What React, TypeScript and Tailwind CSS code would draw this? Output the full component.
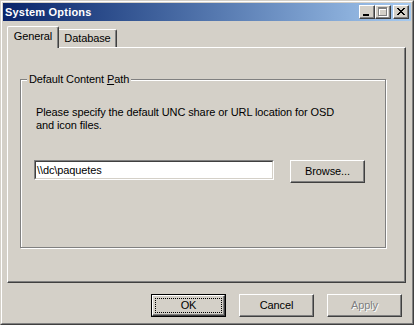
import React from 'react'

function CaptionButton({ kind, gap }: { kind: 'min' | 'max' | 'close'; gap?: boolean }) {
  return (
    <div
      className={`relative w-[16px] h-[14px] bg-[#d4d0c8] border border-t-white border-l-white border-r-[#404040] border-b-[#404040] shadow-[inset_-1px_-1px_0_#808080] ${gap ? 'ml-[2px]' : ''}`}
    >
      <svg className="absolute -left-px -top-px" width="16" height="14" viewBox="0 0 16 14" shapeRendering="crispEdges">
        {kind === 'min' && <rect x="4" y="9" width="6" height="2" fill="#000" />}
        {kind === 'max' && (
          <>
            <g fill="#fff" transform="translate(1 1)">
              <rect x="3" y="2" width="9" height="2" />
              <rect x="3" y="4" width="1" height="7" />
              <rect x="11" y="4" width="1" height="7" />
              <rect x="3" y="10" width="9" height="1" />
            </g>
            <g fill="#808080">
              <rect x="3" y="2" width="9" height="2" />
              <rect x="3" y="4" width="1" height="7" />
              <rect x="11" y="4" width="1" height="7" />
              <rect x="3" y="10" width="9" height="1" />
            </g>
          </>
        )}
        {kind === 'close' && (
          <g fill="#000">
            {[0, 1, 2, 3, 4, 5, 6].map((i) => (
              <React.Fragment key={i}>
                <rect x={4 + i} y={3 + i} width="2" height="1" />
                <rect x={10 - i} y={3 + i} width="2" height="1" />
              </React.Fragment>
            ))}
          </g>
        )}
      </svg>
    </div>
  )
}

function PushButton({ label, isDefault, disabled, className = '' }: { label: string; isDefault?: boolean; disabled?: boolean; className?: string }) {
  if (isDefault) {
    return (
      <div className={`w-[75px] h-[23px] border border-black ${className}`}>
        <div className="h-full border border-t-white border-l-white border-r-[#404040] border-b-[#404040] shadow-[inset_-1px_-1px_0_#808080] p-[2px]">
          <div className="h-full border border-dotted border-black flex items-center justify-center leading-[13px]">
            {label}
          </div>
        </div>
      </div>
    )
  }
  return (
    <div
      className={`w-[75px] h-[23px] border border-t-white border-l-white border-r-[#404040] border-b-[#404040] shadow-[inset_-1px_-1px_0_#808080] flex items-center justify-center leading-[13px] ${
        disabled ? 'text-[#808080] [text-shadow:1px_1px_0_#fff]' : ''
      } ${className}`}
    >
      {label}
    </div>
  )
}

export default function App() {
  return (
    <div className="w-[414px] h-[325px] bg-[#d4d0c8] overflow-hidden font-['Liberation_Sans',Arial,sans-serif] text-[11px] text-black tracking-[-0.1px] select-none">
      <div className="h-full border border-t-[#d4d0c8] border-l-[#d4d0c8] border-r-[#404040] border-b-[#404040]">
        <div className="h-full border border-t-white border-l-white border-r-[#808080] border-b-[#808080] p-px flex flex-col">
          {/* Title bar */}
          <div className="h-[18px] flex items-center bg-gradient-to-r from-[#0a246a] to-[#a6caf0] pl-[2px] pr-[2px]">
            <span className="text-white font-bold tracking-[0.2px] leading-[13px]">System Options</span>
            <div className="ml-auto flex items-center">
              <CaptionButton kind="min" />
              <CaptionButton kind="max" />
              <CaptionButton kind="close" gap />
            </div>
          </div>

          {/* Tabs */}
          <div className="h-[26px] flex items-end pl-[4px]">
            <div className="relative z-10 -mb-px w-[52px] h-[22px] bg-[#d4d0c8] border-t border-l border-r border-t-white border-l-white border-r-[#404040] shadow-[inset_-1px_0_0_#808080] rounded-t-[2px] flex justify-center pt-[3px] leading-[13px]">
              General
            </div>
            <div className="w-[58px] h-[18px] border-t border-r border-t-white border-r-[#404040] shadow-[inset_-1px_0_0_#808080] rounded-tr-[2px] flex justify-center pt-[2px] leading-[13px]">
              Database
            </div>
          </div>

          {/* Tab panel */}
          <div className="ml-[4px] w-[399px] h-[236px] border border-t-white border-l-white border-r-[#404040] border-b-[#404040] shadow-[inset_-1px_-1px_0_#808080]">
            <fieldset className="ml-[12px] mt-[25px] w-[366px] h-[175px] border border-[#808080] shadow-[1px_1px_0_#fff,inset_1px_1px_0_#fff]">
              <legend className="ml-[6px] px-[2px] bg-[#d4d0c8] leading-[13px]">
                Default Content <span className="underline">P</span>ath
              </legend>
              <div className="pt-[20px] px-[13px]">
                <p className="ml-[2px] leading-[13px] whitespace-nowrap">
                  Please specify the default UNC share or URL location for OSD
                  <br />
                  and icon files.
                </p>
                <div className="mt-[28px] flex items-start">
                  <div className="w-[240px] h-[20px] border border-t-[#808080] border-l-[#808080] border-r-white border-b-white">
                    <div className="h-full border border-t-[#404040] border-l-[#404040] border-r-[#d4d0c8] border-b-[#d4d0c8] bg-white flex items-center pl-px leading-[13px]">
                      {'\\\\dc\\paquetes'}
                    </div>
                  </div>
                  <PushButton label="Browse..." className="ml-[16px]" />
                </div>
              </div>
            </fieldset>
          </div>

          {/* Dialog buttons */}
          <div className="mt-[11px] flex justify-end gap-[13px] pr-[9px]">
            <PushButton label="OK" isDefault />
            <PushButton label="Cancel" />
            <PushButton label="Apply" disabled />
          </div>
        </div>
      </div>
    </div>
  )
}
